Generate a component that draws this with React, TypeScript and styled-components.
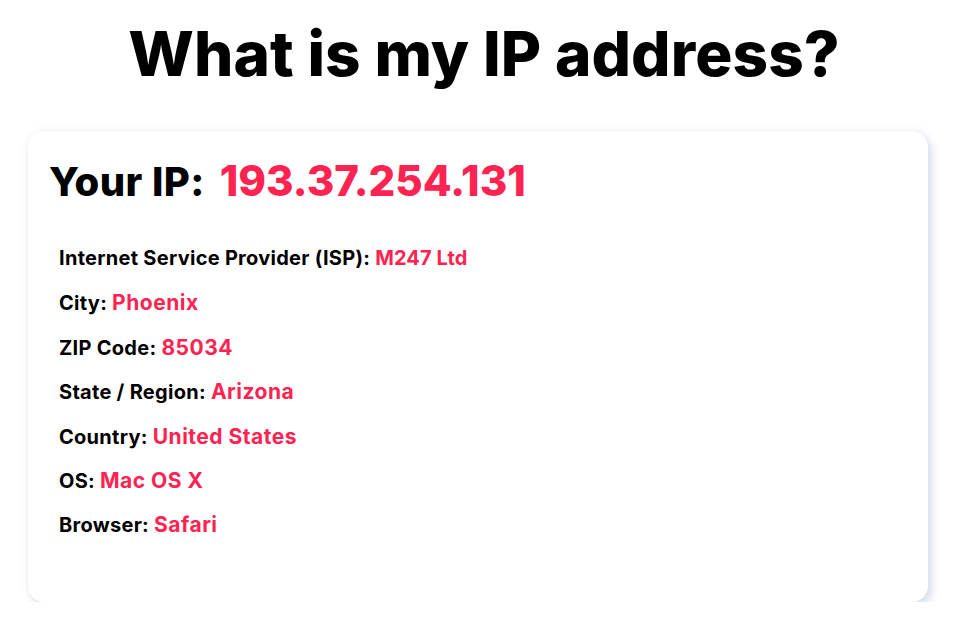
import React from "react";
import styled, { createGlobalStyle } from "styled-components";

const Global = createGlobalStyle`
  html, body { margin: 0; padding: 0; background: #ffffff; }
  body { font-family: "Inter", "Noto Sans", sans-serif; color: #000; }
`;

const Page = styled.main`
  display: flex;
  flex-direction: column;
  align-items: center;
  padding: 0 28px;
`;

const Title = styled.h1`
  margin: 14px 0 0;
  padding-left: 12px;
  height: 100px;
  font-size: 62px;
  font-weight: 800;
  letter-spacing: 0.1px;
  line-height: 80px;
`;

const Card = styled.section`
  box-sizing: border-box;
  width: 900px;
  height: 471px;
  margin-top: 17px;
  background: #fff;
  border-radius: 16px;
  box-shadow: 4px 5px 8px rgba(205, 214, 228, 0.75), 0 0 6px rgba(225, 230, 240, 0.5);
  padding: 24px 21px 22px;
`;

const IpLine = styled.div`
  display: flex;
  align-items: baseline;
  gap: 15px;
  height: 56px;
`;

const IpLabel = styled.span`
  font-size: 40px;
  font-weight: 800;
  letter-spacing: 0.4px;
`;

const IpValue = styled.span`
  font-size: 42px;
  font-weight: 800;
  color: #ff2352;
`;

const List = styled.ul`
  list-style: none;
  margin: 35px 0 0;
  padding: 0 10px;
  display: flex;
  flex-direction: column;
`;

const Row = styled.li`
  height: 44.4px;
  display: flex;
  align-items: baseline;
  gap: 5px;
  font-size: 20px;
  font-weight: 700;
  letter-spacing: 0.28px;
`;

const Val = styled.span<{ $big?: boolean }>`
  color: #ff2352;
  font-size: ${(p) => (p.$big ? "21px" : "20px")};
  letter-spacing: ${(p) => (p.$big ? "0.5px" : "0.1px")};
`;

const rows: [string, string, boolean][] = [
  ["Internet Service Provider (ISP):", "M247 Ltd", false],
  ["City:", "Phoenix", true],
  ["ZIP Code:", "85034", true],
  ["State / Region:", "Arizona", true],
  ["Country:", "United States", true],
  ["OS:", "Mac OS X", true],
  ["Browser:", "Safari", true],
];

export default function App() {
  return (
    <>
      <Global />
      <Page>
        <Title>What is my IP address?</Title>
        <Card>
          <IpLine>
            <IpLabel>Your IP:</IpLabel>
            <IpValue>193.37.254.131</IpValue>
          </IpLine>
          <List>
            {rows.map(([k, v, big]) => (
              <Row key={k}>
                <span>{k}</span>
                <Val $big={big}>{v}</Val>
              </Row>
            ))}
          </List>
        </Card>
      </Page>
    </>
  );
}
